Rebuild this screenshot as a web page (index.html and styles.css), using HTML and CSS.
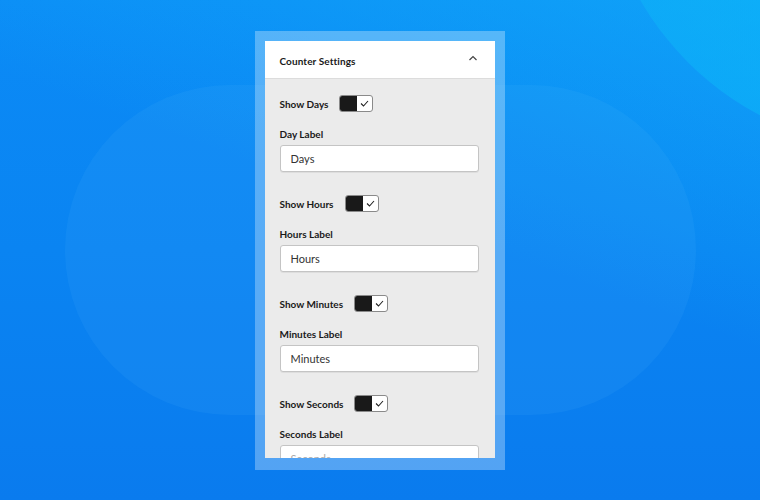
FILE: index.html
```html
<!DOCTYPE html>
<html>
<head>
<meta charset="utf-8">
<link rel="stylesheet" href="styles.css">
</head>
<body>
<div class="scene">
  <div class="glow-shape"></div>
  <div class="corner-shape"></div>
  <div class="frame">
    <div class="panel">
      <div class="panel-header">
        <span class="panel-title">Counter Settings</span>
        <svg class="chevron" width="10" height="6" viewBox="0 0 10 6"><path d="M1.5 5 L5 1.5 L8.5 5" fill="none" stroke="#444" stroke-width="1.2"/></svg>
      </div>
      <div class="panel-body">
        <div class="group">
          <div class="toggle-row"><span class="field-label">Show Days</span><span class="toggle"><span class="toggle-on"></span><span class="toggle-check"><svg width="9" height="7" viewBox="0 0 9 7"><path d="M1 3.5 L3.5 6 L8 1" fill="none" stroke="#222" stroke-width="1.1"/></svg></span></span></div>
          <div class="field-label label-line">Day Label</div>
          <div class="input">Days</div>
        </div>
        <div class="group">
          <div class="toggle-row"><span class="field-label">Show Hours</span><span class="toggle"><span class="toggle-on"></span><span class="toggle-check"><svg width="9" height="7" viewBox="0 0 9 7"><path d="M1 3.5 L3.5 6 L8 1" fill="none" stroke="#222" stroke-width="1.1"/></svg></span></span></div>
          <div class="field-label label-line">Hours Label</div>
          <div class="input">Hours</div>
        </div>
        <div class="group">
          <div class="toggle-row"><span class="field-label">Show Minutes</span><span class="toggle"><span class="toggle-on"></span><span class="toggle-check"><svg width="9" height="7" viewBox="0 0 9 7"><path d="M1 3.5 L3.5 6 L8 1" fill="none" stroke="#222" stroke-width="1.1"/></svg></span></span></div>
          <div class="field-label label-line">Minutes Label</div>
          <div class="input">Minutes</div>
        </div>
        <div class="group">
          <div class="toggle-row"><span class="field-label">Show Seconds</span><span class="toggle"><span class="toggle-on"></span><span class="toggle-check"><svg width="9" height="7" viewBox="0 0 9 7"><path d="M1 3.5 L3.5 6 L8 1" fill="none" stroke="#222" stroke-width="1.1"/></svg></span></span></div>
          <div class="field-label label-line">Seconds Label</div>
          <div class="input placeholder">Seconds</div>
        </div>
      </div>
    </div>
  </div>
</div>
</body>
</html>
```
FILE: styles.css
```css
html, body {
  margin: 0;
  padding: 0;
}
body {
  font-family: Lato, "Noto Sans", sans-serif;
  color: #111;
}
.scene {
  position: relative;
  width: 760px;
  height: 500px;
  overflow: hidden;
  background:
    linear-gradient(200deg, rgba(20, 190, 250, 0.45) 0%, rgba(20, 190, 250, 0) 45%),
    linear-gradient(180deg, #0b8bf6 0%, #0a84f2 50%, #0a7bee 100%);
  display: flex;
  justify-content: center;
  align-items: flex-start;
  padding-top: 31px;
  padding-right: 1px;
  box-sizing: border-box;
}
.glow-shape {
  position: absolute;
  left: 65px;
  top: 85px;
  width: 631px;
  height: 330px;
  border-radius: 165px;
  background: rgba(120, 200, 255, 0.08);
}
.corner-shape {
  position: absolute;
  left: 600px;
  top: -450px;
  width: 600px;
  height: 600px;
  border-radius: 50%;
  background: radial-gradient(circle at 70% 68%, #00c6fd 0%, #0abaf9 35%, #12acf6 100%);
  opacity: 0.55;
}
.frame {
  position: relative;
  width: 250px;
  padding: 10px 10px 12px 10px;
  box-sizing: border-box;
  background: rgba(255, 255, 255, 0.30);
}
.panel {
  height: 417px;
  overflow: hidden;
  background: #ebebeb;
}
.panel-header {
  height: 38px;
  background: #fff;
  border-bottom: 1px solid #dcdcdc;
  box-sizing: border-box;
  display: flex;
  align-items: center;
  justify-content: space-between;
  padding: 0 17px 0 15px;
}
.panel-title {
  font-weight: 700;
  font-size: 10px;
  color: #1a1a1a;
  letter-spacing: 0.1px;
  margin-top: 2px;
}
.chevron {
  display: block;
  margin-top: -3px;
}
.panel-body {
  padding: 15px 16px 0 15px;
  display: flex;
  flex-direction: column;
  gap: 22px;
}
.group {
  display: flex;
  flex-direction: column;
}
.toggle-row {
  display: flex;
  align-items: center;
  gap: 11px;
  height: 17px;
  padding-top: 1px;
}
.field-label {
  font-weight: 700;
  font-size: 10px;
  color: #1a1a1a;
}
.label-line {
  margin-top: 16px;
  height: 12px;
  line-height: 12px;
}
.toggle {
  display: flex;
  width: 34px;
  height: 17px;
  box-sizing: border-box;
  border: 1px solid #8a8a8a;
  border-radius: 3px;
  overflow: hidden;
  background: #fff;
}
.toggle-on {
  width: 17px;
  background: #191919;
}
.toggle-check {
  flex: 1;
  display: flex;
  align-items: center;
  justify-content: center;
}
.toggle-check svg {
  display: block;
}
.input {
  margin-top: 5px;
  height: 27px;
  box-sizing: border-box;
  background: #fff;
  border: 1px solid #c4c4c4;
  border-radius: 3px;
  box-shadow: 0 1px 0 rgba(0,0,0,0.06);
  padding-left: 10px;
  display: flex;
  align-items: center;
  font-size: 11px;
  color: #333;
}
.placeholder {
  color: #aaa;
}
```
